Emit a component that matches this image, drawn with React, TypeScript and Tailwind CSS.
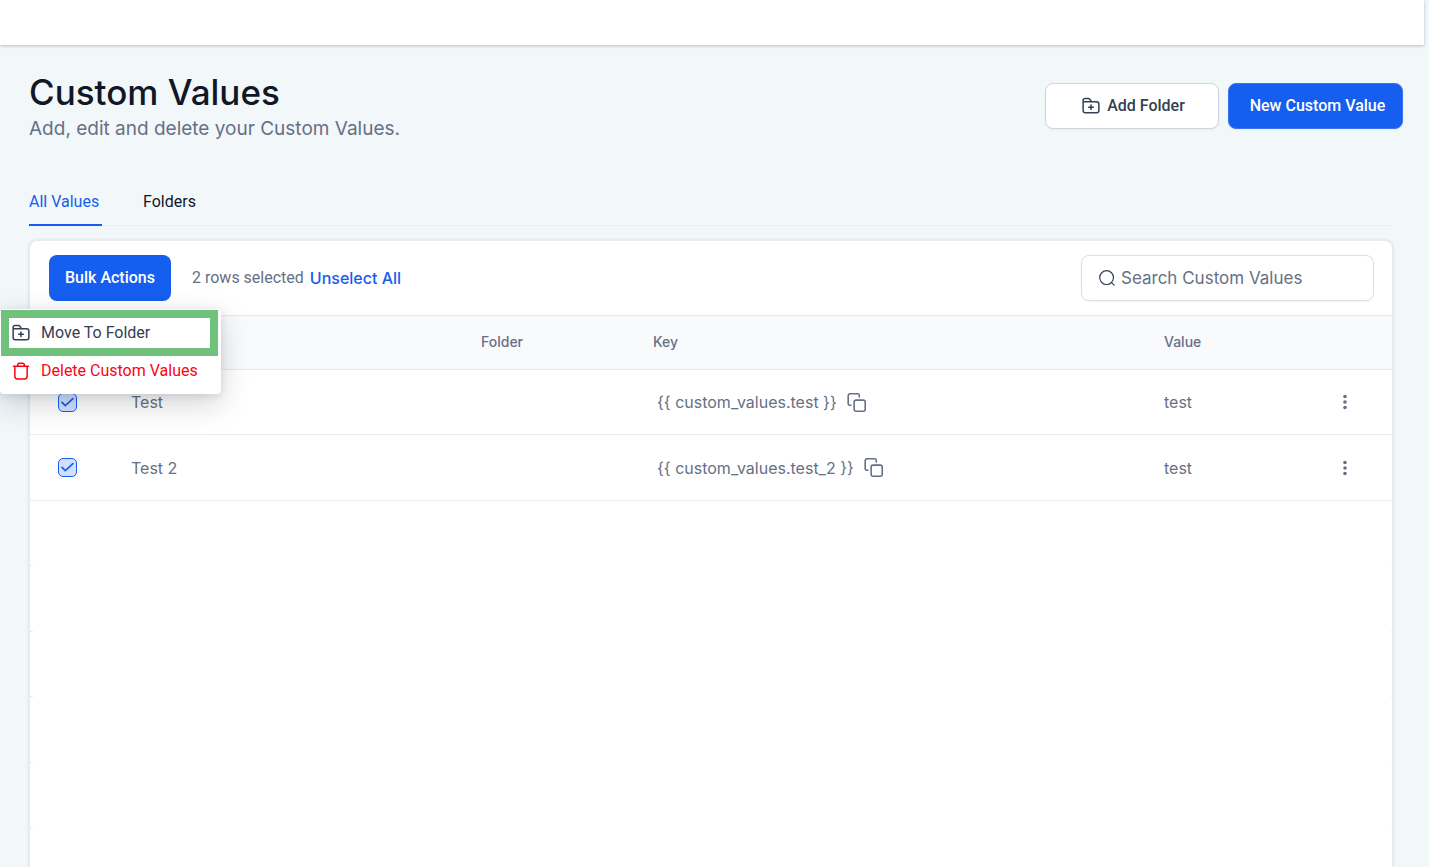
import { useState } from "react";
import type { ReactNode } from "react";

type Row = { id: string; name: string; folder: string; key: string; value: string };

const rows: Row[] = [
  { id: "test", name: "Test", folder: "", key: "{{ custom_values.test }}", value: "test" },
  { id: "test_2", name: "Test 2", folder: "", key: "{{ custom_values.test_2 }}", value: "test" },
];

const emptyRows = [0, 1, 2, 3, 4];

function Icon({ children, className }: { children: ReactNode; className: string }) {
  return (
    <svg
      aria-hidden="true"
      viewBox="0 0 24 24"
      fill="none"
      stroke="currentColor"
      strokeWidth="2"
      strokeLinecap="round"
      strokeLinejoin="round"
      className={className}
    >
      {children}
    </svg>
  );
}

function FolderPlusIcon({ className }: { className: string }) {
  return (
    <Icon className={className}>
      <path d="M1.500 7V4.600A2.600 2.600 0 0 1 4.100 2h4.500c.9 0 1.500.4 2 1.100L12.500 6.200h7A3 3 0 0 1 22.500 9.200V18a3 3 0 0 1-3 3h-15a3 3 0 0 1-3-3V6.200h11" />
      <path d="M12 10.500v6.200M8.900 13.600h6.200" />
    </Icon>
  );
}

function TrashIcon({ className }: { className: string }) {
  return (
    <Icon className={className}>
      <path d="M2 5.500h20M7.500 5.500V4A2.500 2.500 0 0 1 10 1.500h4A2.500 2.500 0 0 1 16.500 4v1.500M3.800 5.500v13.500a3.500 3.500 0 0 0 3.500 3.500h9.400a3.500 3.500 0 0 0 3.500-3.500V5.500" />
    </Icon>
  );
}

function CopyIcon({ className }: { className: string }) {
  return (
    <Icon className={className}>
      <rect x="9" y="9" width="14" height="14" rx="2.5" />
      <path d="M5 15.500H3.500A2 2 0 0 1 1.500 13.500V3.500A2.500 2.500 0 0 1 4 1h9.500A2 2 0 0 1 15.500 3v2" />
    </Icon>
  );
}

function SearchIcon({ className }: { className: string }) {
  return (
    <svg aria-hidden="true" viewBox="0 0 16 16" fill="none" stroke="currentColor" strokeWidth="1.2" strokeLinecap="round" className={className}>
      <circle cx="7.600" cy="7.600" r="6.900" />
      <path d="M12.600 12.600l2.600 2.600" />
    </svg>
  );
}

function DotsIcon({ className }: { className: string }) {
  return (
    <svg aria-hidden="true" viewBox="0 0 20 20" fill="currentColor" className={className}>
      <circle cx="10" cy="4.500" r="1.800" />
      <circle cx="10" cy="10" r="1.800" />
      <circle cx="10" cy="15.500" r="1.800" />
    </svg>
  );
}

function RowCheckbox({ label }: { label: string }) {
  return (
    <span className="relative block size-[19px]">
      <input
        type="checkbox"
        defaultChecked
        aria-label={label}
        className="peer block size-[19px] appearance-none rounded-[5px] border border-[#155eef] bg-white checked:bg-[#d1e0ff]"
      />
      <svg
        aria-hidden="true"
        viewBox="0 0 20 20"
        fill="none"
        stroke="#155eef"
        strokeWidth="1.8"
        strokeLinecap="round"
        strokeLinejoin="round"
        className="pointer-events-none absolute inset-0 hidden size-[19px] peer-checked:block"
      >
        <path d="M4.200 9.800l3.500 3.500 8-7.300" />
      </svg>
    </span>
  );
}

export default function App() {
  const [tab, setTab] = useState("all");
  const tabClass = "-mb-px h-12 min-w-[73px] border-b-2 pt-px text-left text-[16px]";
  const activeTab = "border-[#155eef] text-[#155eef]";
  const idleTab = "border-transparent text-[#101828]";

  return (
    <div className="flex min-h-screen flex-col bg-[#f2f7fa] font-[Roboto,sans-serif] text-[16px] leading-6 text-[#667085]">
      <header className="mr-[5px] h-[45px] bg-white shadow-[0_1px_3px_rgba(16,24,40,0.25)]" />

      <main className="flex flex-1 flex-col pt-6 pr-9 pl-[29px]">
        <div className="-mr-[10px] flex items-start justify-between">
          <div className="pt-[3px]">
            <h1 className="font-[Inter,sans-serif] text-[35px] leading-10 font-medium text-[#101828]">Custom Values</h1>
            <p className="font-[Inter,sans-serif] text-[19px] leading-[33px]">Add, edit and delete your Custom Values.</p>
          </div>
          <div className="flex gap-[9px] pt-[14px] font-medium">
            <button
              type="button"
              className="flex h-[46px] w-[174px] items-center justify-center gap-[7px] rounded-lg border border-[#d0d5dd] bg-white pl-[3px] text-[#344054] shadow-xs"
            >
              <FolderPlusIcon className="size-[18px]" />
              Add Folder
            </button>
            <button type="button" className="h-[46px] w-[175px] rounded-lg border border-[#3b74f0] bg-[#155eef] pl-[4px] text-white shadow-xs">
              New Custom Value
            </button>
          </div>
        </div>

        <div role="tablist" className="mt-[33px] flex gap-[41px] border-b border-[#e9eef2]">
          <button type="button" role="tab" aria-selected={tab === "all"} onClick={() => setTab("all")} className={`${tabClass} ${tab === "all" ? activeTab : idleTab}`}>
            All Values
          </button>
          <button type="button" role="tab" aria-selected={tab === "folders"} onClick={() => setTab("folders")} className={`${tabClass} ${tab === "folders" ? activeTab : idleTab}`}>
            Folders
          </button>
        </div>

        <section className="mt-[14px] flex flex-1 flex-col rounded-t-lg border border-b-0 border-[#e6ebf1] bg-white shadow-[0_0_3px_rgba(16,24,40,0.14)]">
          <div className="flex h-[74px] items-center justify-between pr-[18px] pl-[19px]">
            <div className="flex items-center gap-[21px]">
              <div className="relative">
                <button type="button" aria-haspopup="menu" aria-expanded="true" className="h-[46px] w-[122px] rounded-lg bg-[#155eef] font-medium text-white">
                  Bulk Actions
                </button>
                <div
                  role="menu"
                  className="absolute top-[54px] -left-[49px] z-10 w-[221px] rounded-sm bg-white pt-px pr-[3px] pb-[8px] pl-px shadow-[0_10px_30px_rgba(16,24,40,0.18),0_2px_8px_rgba(16,24,40,0.1)]"
                >
                  <button type="button" role="menuitem" className="flex h-[46px] w-full items-center gap-[11px] border-8 border-[#6fc17b] pl-[3px] text-[#344054]">
                    <FolderPlusIcon className="size-[18px]" />
                    Move To Folder
                  </button>
                  <button type="button" role="menuitem" className="flex h-[30px] w-full items-center gap-[11px] pl-[11px] text-[#fb0514]">
                    <TrashIcon className="size-[18px]" />
                    Delete Custom Values
                  </button>
                </div>
              </div>
              <p className="flex gap-[6px]">
                2 rows selected
                <button type="button" className="font-[Inter,sans-serif] font-medium text-[#155eef]">
                  Unselect All
                </button>
              </p>
            </div>
            <label className="flex h-[46px] w-[293px] items-center gap-[6px] rounded-lg border border-[#dcdfe5] px-[17px] shadow-xs">
              <SearchIcon className="size-4 shrink-0 text-[#344054]" />
              <input
                type="search"
                aria-label="Search Custom Values"
                placeholder="Search Custom Values"
                className="min-w-0 flex-1 bg-transparent font-[Inter,sans-serif] text-[17px] outline-none placeholder:text-[#667085]"
              />
            </label>
          </div>

          <table className="w-full table-fixed border-separate border-spacing-0 text-left font-[Inter,sans-serif]">
            <colgroup>
              <col className="w-[101px]" />
              <col className="w-[350px]" />
              <col className="w-[172px]" />
              <col />
              <col className="w-[171px]" />
              <col className="w-[57px]" />
            </colgroup>
            <thead className="bg-[#f9fafc] text-[14px]">
              <tr className="h-[55px] *:border-y *:border-[#e6eaf0] *:p-0 *:pb-px *:font-medium">
                <th aria-label="Selected" />
                <th aria-label="Name" />
                <th>Folder</th>
                <th>Key</th>
                <th>Value</th>
                <th aria-label="Options" />
              </tr>
            </thead>
            <tbody>
              {rows.map((row) => (
                <tr key={row.id} className="h-[65px] *:border-b *:border-[#e9ebef] *:p-0 even:h-[66px]">
                  <td className="pl-[28px]!">
                    <RowCheckbox label={`Select ${row.name}`} />
                  </td>
                  <td>{row.name}</td>
                  <td>{row.folder}</td>
                  <td>
                    <span className="flex items-center gap-[10px] pl-1">
                      {row.key}
                      <button type="button" aria-label={`Copy key of ${row.name}`}>
                        <CopyIcon className="size-[19px]" />
                      </button>
                    </span>
                  </td>
                  <td>{row.value}</td>
                  <td>
                    <button type="button" aria-label={`Options for ${row.name}`} className="block">
                      <DotsIcon className="size-5" />
                    </button>
                  </td>
                </tr>
              ))}
            </tbody>
          </table>

          <div aria-hidden="true">
            {emptyRows.map((n) => (
              <div key={n} className="flex h-[65px] justify-between even:h-[66px]">
                <span className="w-[3px] border-b border-[#e6ebf1]" />
                <span className="w-px border-b border-[#e6ebf1]" />
              </div>
            ))}
          </div>
        </section>
      </main>
    </div>
  );
}
